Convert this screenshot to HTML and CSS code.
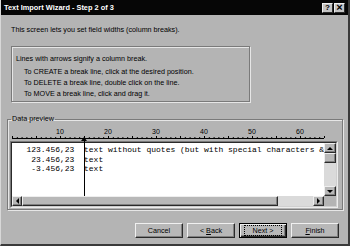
FILE: index.html
```html
<!DOCTYPE html>
<html lang="en">

<head>
    <meta charset="utf-8">
    <title>Text Import Wizard</title>
    <link rel="stylesheet" href="styles.css">
</head>

<body>

    <div class="dialog">
        <header class="titlebar">
            <span class="title">Text Import Wizard - Step 2 of 3</span>
            <div class="title-btns">
                <button class="tbtn">?</button>
                <button class="tbtn close">&#215;</button>
            </div>
        </header>

        <main class="content">
            <p class="intro">This screen lets you set field widths (column breaks).</p>

            <div class="info">
                <p class="first">Lines with arrows signify a column break.</p>
                <p class="indent">To CREATE a break line, click at the desired position.</p>
                <p class="indent">To DELETE a break line, double click on the line.</p>
                <p class="indent">To MOVE a break line, click and drag it.</p>
            </div>

            <fieldset class="preview">
                <legend>Data preview</legend>

                <svg class="ruler" width="331" height="17" viewBox="0 0 331 17">
                    <defs>
                        <pattern id="minor" x="2" y="0" width="4.8" height="17" patternUnits="userSpaceOnUse">
                            <rect x="0" y="13" width="1" height="1" fill="#000" />
                        </pattern>
                        <pattern id="major" x="2" y="0" width="24" height="17" patternUnits="userSpaceOnUse">
                            <rect x="0" y="12" width="1" height="2" fill="#000" />
                        </pattern>
                    </defs>
                    <rect x="2" y="14" width="312" height="1" fill="#000" />
                    <rect x="2" y="0" width="313" height="17" fill="url(#minor)" />
                    <rect x="2" y="0" width="313" height="17" fill="url(#major)" />
                    <g class="nums">
                        <text x="50" y="10">10</text>
                        <text x="98" y="10">20</text>
                        <text x="146" y="10">30</text>
                        <text x="194" y="10">40</text>
                        <text x="242" y="10">50</text>
                        <text x="290" y="10">60</text>
                    </g>
                    <polygon points="71,17 77,17 74,13" fill="#000" />
                </svg>

                <div class="sunken">
                    <div class="sunken-in">
                        <div class="view-row">
<pre class="data">   123.456,23  text without quotes (but with special characters &amp;
    23.456,23  text
    -3.456,23  text</pre>
                            <div class="vscroll">
                                <div class="sbtn"><i class="arr up"></i></div>
                                <div class="sbtn thumb-v"></div>
                                <div class="track"></div>
                                <div class="sbtn"><i class="arr down"></i></div>
                            </div>
                        </div>
                        <div class="hscroll">
                            <div class="sbtn"><i class="arr left"></i></div>
                            <div class="sbtn thumb-h"></div>
                            <div class="track"></div>
                            <div class="sbtn"><i class="arr right"></i></div>
                            <div class="corner"></div>
                        </div>
                        <div class="break-line"></div>
                    </div>
                </div>
            </fieldset>

            <div class="buttons">
                <button class="btn">Cancel</button>
                <button class="btn">&lt; <u>B</u>ack</button>
                <button class="btn next"><span>Next &gt;</span></button>
                <button class="btn"><u>F</u>inish</button>
            </div>
        </main>
    </div>

</body>

</html>
```

FILE: styles.css
```css
body {
    margin: 0;
    font-family: "Liberation Sans", Arial, sans-serif;
    font-size: 7.2px;
    color: #000;
}

.dialog {
    width: 350px;
    height: 246px;
    box-sizing: border-box;
    background-color: #b4b4b4;
    border-left: 1px solid #d8d8d8;
    border-right: 2px solid #3a3a3a;
    border-bottom: 2px solid #3a3a3a;
}

/* title bar */

.titlebar {
    height: 15px;
    background-color: #060606;
    color: #fff;
    display: flex;
    align-items: center;
    justify-content: space-between;
    padding: 0 3px 0 3px;
}

.title {
    font-weight: bold;
    font-size: 7.4px;
}

.title-btns {
    display: flex;
    gap: 1px;
}

.tbtn {
    width: 11px;
    height: 10px;
    padding: 0;
    background-color: #c4c4c4;
    border: 1px solid;
    border-color: #f0f0f0 #2a2a2a #2a2a2a #f0f0f0;
    font-family: "Liberation Sans", Arial, sans-serif;
    font-weight: bold;
    font-size: 8px;
    line-height: 7px;
    color: #000;
}

.close {
    font-size: 11px;
}

/* main area */

.content {
    padding: 0 6px;
}

.content p {
    margin: 0;
}

.intro {
    margin: 10px 0 0 4px !important;
    line-height: 10px;
}

.info {
    margin: 11px 0 0 4px;
    width: 239px;
    height: 56px;
    box-sizing: border-box;
    padding: 6px 4px 0;
    border: 1px solid #7a7a7a;
    box-shadow: inset 1px 1px 0 #e6e6e6, 1px 1px 0 #e6e6e6;
}

.info p {
    line-height: 11px;
}

.info .first {
    margin-bottom: 2px;
}

.info .indent {
    padding-left: 8px;
}

.preview {
    margin: 12px 0 0;
    padding: 0 3px 1px 2px;
    width: 336px;
    box-sizing: border-box;
    min-width: 0;
    border: 1px solid #7a7a7a;
    box-shadow: inset 1px 1px 0 #e6e6e6, 1px 1px 0 #e6e6e6;
}

.preview legend {
    padding: 0 1px;
    margin-left: 1px;
    line-height: 10px;
}

.ruler {
    display: block;
}

.ruler .nums text {
    font-family: "Liberation Sans", Arial, sans-serif;
    font-size: 7px;
    text-anchor: middle;
}

.sunken {
    border: 1px solid;
    border-color: #7a7a7a #ececec #ececec #7a7a7a;
    width: 328px;
    box-sizing: border-box;
}

.sunken-in {
    position: relative;
    border: 1px solid;
    border-color: #2a2a2a #cfcfcf #cfcfcf #2a2a2a;
}

.view-row {
    display: flex;
    height: 53px;
}

.data {
    flex: 1;
    margin: 0;
    padding-top: 2px;
    background-color: #fff;
    font-family: "Liberation Mono", "Courier New", monospace;
    font-size: 8px;
    line-height: 9.5px;
    overflow: hidden;
    white-space: pre;
}

.vscroll {
    width: 12px;
    display: flex;
    flex-direction: column;
}

.hscroll {
    display: flex;
    height: 10px;
}

.track {
    flex: 1;
    background-color: #dadada;
}

.sbtn {
    box-sizing: border-box;
    flex: 0 0 10px;
    display: flex;
    align-items: center;
    justify-content: center;
    background-color: #b8b8b8;
    border: 1px solid;
    border-color: #eeeeee #2a2a2a #2a2a2a #eeeeee;
    box-shadow: inset -1px -1px 0 #808080;
}

.hscroll .sbtn {
    flex-basis: 10px;
}

.hscroll .thumb-h {
    flex-basis: 256px;
}

.hscroll .sbtn:nth-child(4) {
    flex-basis: 11px;
}

.corner {
    width: 12px;
    background-color: #b4b4b4;
}

.arr {
    width: 0;
    height: 0;
    border: 3px solid transparent;
}

.arr.up {
    border-bottom-color: #000;
    border-top-width: 0;
}

.arr.down {
    border-top-color: #000;
    border-bottom-width: 0;
}

.arr.left {
    border-right-color: #000;
    border-left-width: 0;
}

.arr.right {
    border-left-color: #000;
    border-right-width: 0;
}

.break-line {
    position: absolute;
    left: 72px;
    top: -3px;
    width: 1px;
    height: 56px;
    background-color: #000;
}

/* buttons */

.buttons {
    display: flex;
    justify-content: flex-end;
    gap: 4px;
    margin-top: 13px;
    padding-right: 3px;
}

.btn {
    width: 48px;
    height: 15px;
    padding: 0;
    background-color: #b8b8b8;
    border: 1px solid;
    border-color: #f0f0f0 #2a2a2a #2a2a2a #f0f0f0;
    box-shadow: inset -1px -1px 0 #808080;
    font-family: "Liberation Sans", Arial, sans-serif;
    font-size: 7.2px;
    color: #000;
}

.btn.next {
    border-color: #000;
    box-shadow: inset 1px 1px 0 #f0f0f0, inset -1px -1px 0 #2a2a2a, inset -2px -2px 0 #808080;
}

.btn.next span {
    border: 1px dotted #000;
    padding: 0 8px;
}
```
